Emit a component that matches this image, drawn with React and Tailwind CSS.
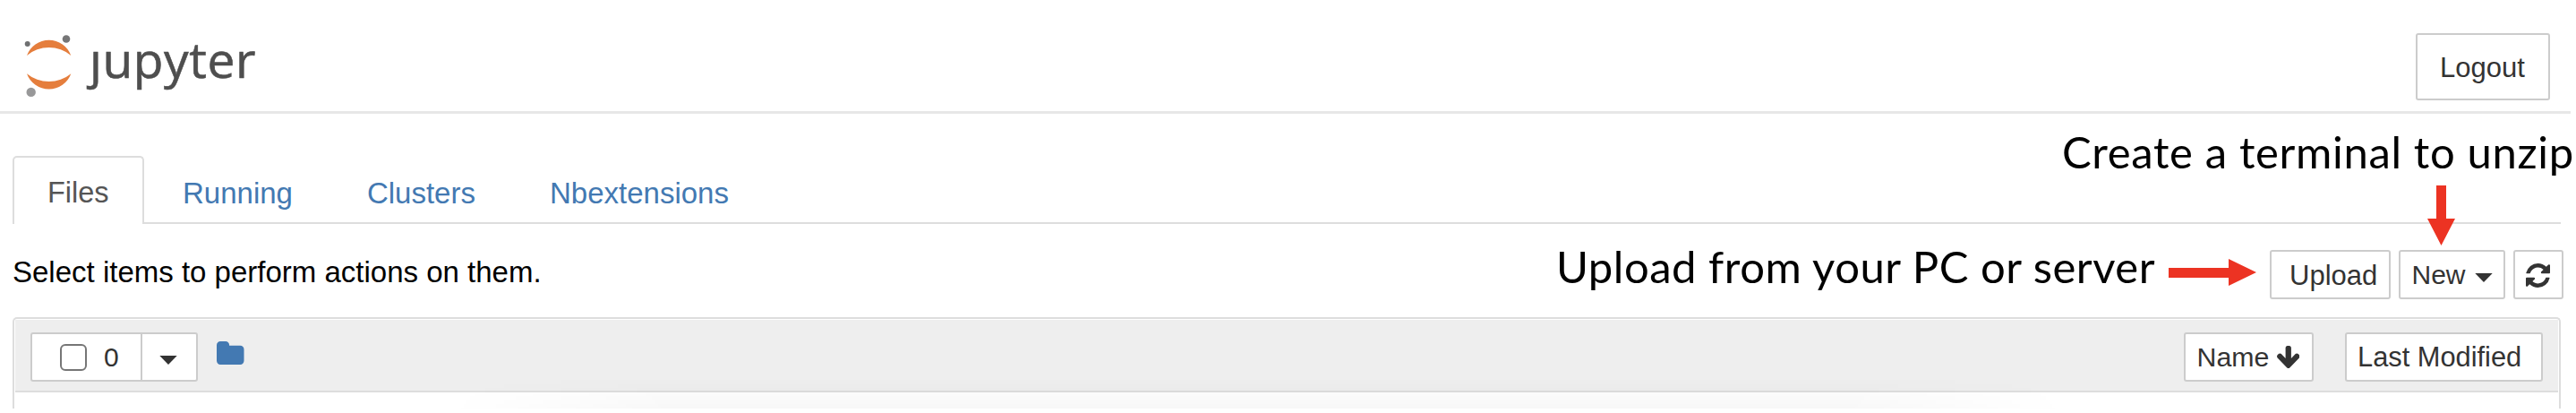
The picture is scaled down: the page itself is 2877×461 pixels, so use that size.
import React from "react";

const REFRESH =
  "M1639 1056q0 5-1 7-64 268-268 434.5t-478 166.5q-146 0-282.5-55t-243.5-157l-129 129q-19 19-45 19t-45-19-19-45v-448q0-26 19-45t45-19h448q26 0 45 19t19 45-19 45l-137 137q71 66 161 102t187 36q134 0 250-65t186-179q11-17 53-117 8-23 30-23h192q13 0 22.5 9.5t9.5 22.5zm25-800v448q0 26-19 45t-45 19h-448q-26 0-45-19t-19-45 19-45l138-138q-148-137-349-137-134 0-250 65t-186 179q-11 17-53 117-8 23-30 23h-199q-13 0-22.5-9.5t-9.5-22.5v-7q65-268 270-434.5t480-166.5q146 0 284 55.5t245 156.5l130-129q19-19 45-19t45 19 19 45z";
const ARROW_DOWN =
  "M1675 832q0 53-37 90l-651 652q-39 37-91 37-53 0-90-37l-651-652q-38-36-38-90 0-53 38-91l74-75q39-37 91-37 53 0 90 37l294 294v-704q0-52 38-90t90-38h128q52 0 90 38t38 90v704l294-294q37-37 90-37 52 0 91 37l75 75q37 39 37 91z";
const FOLDER =
  "M1728 608v704q0 92-66 158t-158 66h-1216q-92 0-158-66t-66-158v-960q0-92 66-158t158-66h320q92 0 158 66t66 158v32h672q92 0 158 66t66 158z";

function Logo() {
  return (
    <div className="flex items-start pl-[25px]">
      <svg className="mt-[35px] h-[76px] w-[60px]" viewBox="25 35 60 76">
        <path d="M30 62A26.2 26.2 0 0 1 79.3 62A38.3 38.3 0 0 0 30 62Z" fill="#e57e3d" />
        <path d="M30 82.2A26.2 26.2 0 0 0 79.3 82.2A38.8 38.8 0 0 1 30 82.2Z" fill="#e57e3d" />
        <circle cx="30.7" cy="49" r="3" fill="#6f7071" />
        <circle cx="74" cy="43.5" r="4.3" fill="#767677" />
        <circle cx="34.7" cy="102.9" r="5.2" fill="#989899" />
      </svg>
      <div className="mt-[38px] ml-[15px] whitespace-nowrap font-['Open_Sans',sans-serif] text-[55px] leading-none tracking-[0.6px] text-[#4e4e4e] [-webkit-text-stroke:0.6px_#4e4e4e]">
        <span className="inline-block [clip-path:inset(15px_-10px_-20px_-20px)]">j</span>upyter
      </div>
    </div>
  );
}

function Button({ className, children }) {
  return (
    <button
      type="button"
      className={"flex items-start rounded-[3px] border-2 border-[#ccc] bg-white text-left leading-none whitespace-nowrap text-[#333] " + className}
    >
      {children}
    </button>
  );
}

function Caret({ className }) {
  return (
    <svg className={"h-[10px] w-[20px] " + className} viewBox="0 0 20 10">
      <path d="M0.3 0H19.7L10 10Z" fill="#333" />
    </svg>
  );
}

function Tabs() {
  return (
    <nav className="mx-[14px] mt-[47px] flex h-[76px] w-[2846px] text-[33px] leading-none text-[#4379b2]">
      <a className="w-[147px] rounded-t-[5px] border-2 border-b-0 border-[#ddd] pt-[23px] pl-[37px] text-[32.5px] text-[#555]">Files</a>
      <div className="flex flex-1 gap-[83px] border-b-2 border-[#ddd] pt-[25px] pl-[43px]">
        <a>Running</a>
        <a>Clusters</a>
        <a>Nbextensions</a>
      </div>
    </nav>
  );
}

export default function App() {
  return (
    <div className="relative h-[461px] w-[2877px] overflow-hidden bg-white font-['Liberation_Sans',Arial,sans-serif] text-black">
      <header className="flex h-[127px] w-[2871px] items-start justify-between border-b-[3px] border-[#e7e7e7] pr-[23px]">
        <Logo />
        <Button className="mt-[37px] h-[75px] w-[150px] pt-[21px] pl-[25px] text-[31px]">Logout</Button>
      </header>

      <Tabs />

      <div className="flex h-[104px] items-start justify-between pr-[14px] pl-[14px]">
        <div className="pt-[37px] text-[33px] leading-none">Select items to perform actions on them.</div>
        <div className="flex gap-[9px] pt-[29px]">
          <Button className="h-[55px] w-[135px] pt-[11px] pl-[20px] text-[31px]">Upload</Button>
          <Button className="h-[55px] w-[119px] pt-[11px] pl-[12.5px] text-[30px]">
            New
            <Caret className="mt-[13px] ml-[10px]" />
          </Button>
          <Button className="h-[55px] w-[56px] pt-[13px] pl-[12px]">
            <svg className="h-[27px] w-[27px]" viewBox="128 128 1536 1536" fill="#333">
              <path d={REFRESH} />
            </svg>
          </Button>
        </div>
      </div>

      <main className="mx-[14px] h-[102px] w-[2846px] rounded-t-[5px] border-2 border-b-0 border-[#ddd] px-px pt-px">
        <div className="flex h-[81px] items-start justify-between border-b-2 border-[#ddd] bg-[#eee] px-[17px] pt-[14px]">
          <div className="flex items-start">
            <div className="flex h-[55px] w-[187px] rounded-[3px] border-2 border-[#ccc] bg-white leading-none text-[#333]">
              <label className="flex w-[123px] items-start border-r-2 border-[#ccc] pt-[11px] pl-[31px] text-[30px]">
                <input type="checkbox" className="h-[30px] w-[30px] appearance-none rounded-[6px] border-2 border-[#767676] bg-white" />
                <span className="ml-[19px]">0</span>
              </label>
              <Caret className="mt-[24px] ml-[19px]" />
            </div>
            <svg className="mt-[10px] ml-[21px] h-[26px] w-[30.5px]" viewBox="64 128 1664 1408" fill="#4379b2">
              <path d={FOLDER} />
            </svg>
          </div>
          <div className="flex gap-[35px]">
            <Button className="h-[55px] w-[145px] pt-[11px] pl-[12.5px] text-[30.3px]">
              Name
              <svg className="mt-[2px] ml-[8.5px] h-[25px] w-[25.5px]" viewBox="117 128 1558 1483" preserveAspectRatio="none" fill="#333">
                <path d={ARROW_DOWN} />
              </svg>
            </Button>
            <Button className="h-[55px] w-[221px] pt-[11px] pl-[12px] text-[30.8px]">Last Modified</Button>
          </div>
        </div>
      </main>

      <div className="absolute top-[422px] left-[500px] h-[34px] w-[1810px] bg-linear-to-b from-transparent to-black/3 [mask-image:linear-gradient(to_right,transparent,black_14%,black_86%,transparent)]" />

      <div className="absolute top-[145px] left-[2303px] whitespace-nowrap font-['Lato',sans-serif] text-[49px] leading-none tracking-[0.65px]">
        Create a terminal to unzip
      </div>
      <div className="absolute top-[273px] left-[1738px] whitespace-nowrap font-['Lato',sans-serif] text-[49px] leading-none tracking-[0.52px]">
        Upload from your PC or server
      </div>
      <svg className="absolute top-[207px] left-[2711px] h-[67px] w-[31px]" viewBox="0 0 31 67" fill="#ec3323">
        <path d="M10 0H21V37H31L15.5 67L0 37H10Z" />
      </svg>
      <svg className="absolute top-[289px] left-[2422px] h-[30px] w-[98px]" viewBox="0 0 98 30" fill="#ec3323">
        <path d="M0 10H67V0L98 15L67 30V21H0Z" />
      </svg>
    </div>
  );
}
